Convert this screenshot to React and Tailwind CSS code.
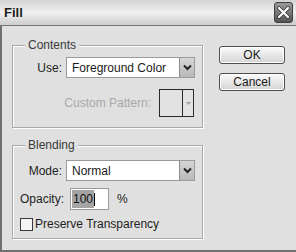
import React from 'react';

function Chevron() {
  return (
    <svg width="9" height="7" viewBox="0 0 9 7">
      <path d="M1 1.5 L4.5 5 L8 1.5" fill="none" stroke="#222" strokeWidth="2" />
    </svg>
  );
}

function Select({ value }) {
  return (
    <div className="flex-1 flex h-full bg-white border border-[#9b9b9b] ml-[4px]">
      <div className="flex-1 flex items-center pl-[5px] text-[#1a1a1a]">{value}</div>
      <div className="w-[15px] flex items-center justify-center bg-gradient-to-b from-[#d6d6d6] to-[#b9b9b9] border-l border-[#8a8a8a]">
        <Chevron />
      </div>
    </div>
  );
}

function Group({ title, height, className = '', children }) {
  return (
    <fieldset
      className={`border border-[#a8a8a8] shadow-[inset_1px_1px_0_#fff,1px_1px_0_#fff] px-[7px] ${height} ${className}`}
    >
      <legend className="ml-[5px] px-[3px] leading-[14px] bg-[#e0e0e0] text-[#3a3a3a]">{title}</legend>
      {children}
    </fieldset>
  );
}

function Button({ children }) {
  return (
    <button className="w-[66px] h-[18px] rounded-[3px] border border-[#4e4e4e] bg-gradient-to-b from-[#fbfbfb] to-[#d4d4d4] shadow-[inset_0_0_0_1px_#fff] text-[12px] leading-none text-[#1a1a1a]">
      {children}
    </button>
  );
}

export default function App() {
  return (
    <div className="w-[296px] h-[252px] flex flex-col bg-[#e0e0e0] font-['Liberation_Sans',Arial,sans-serif] text-[12px] text-[#1e1e1e] overflow-hidden">
      {/* Title bar */}
      <div className="h-[26px] flex items-center justify-between pl-[4px] pr-[3px] border-b border-[#767676] bg-gradient-to-b from-[#d2d2d2] via-[#f1f1f1] to-[#cdcdcd]">
        <span className="font-bold text-[13px] text-[#1a1a1a]">Fill</span>
        <div className="w-[19px] h-[21px] rounded-[3px] border border-[#3f3f3f] bg-gradient-to-b from-[#9a9a9a] to-[#555] flex items-center justify-center">
          <svg width="13" height="13" viewBox="0 0 13 13">
            <path d="M2 2 L11 11 M11 2 L2 11" stroke="#333" strokeWidth="3.6" strokeLinecap="round" />
            <path d="M2 2 L11 11 M11 2 L2 11" stroke="#fff" strokeWidth="2.2" strokeLinecap="round" />
          </svg>
        </div>
      </div>

      <div className="flex flex-1 border-l-2 border-b-2 border-[#6f6f6f]">
        {/* Left column */}
        <div className="w-[201px] pl-[10px] pt-[12px]">
          <Group title="Contents" height="h-[90px]">
            <div className="flex items-center h-[21px] mt-[5px]">
              <span className="w-[42px] text-right">Use:</span>
              <Select value="Foreground Color" />
            </div>
            <div className="flex items-center justify-end mt-[11px] pr-[1px]">
              <span className="text-[#a9a9a9] mr-[8px]">Custom Pattern:</span>
              <div className="w-[35px] h-[28px] flex border border-[#2a2a2a] bg-[#e2e2e2]">
                <div className="flex-1 border-r border-[#2a2a2a]" />
                <div className="w-[10px] flex items-center justify-center">
                  <svg width="5" height="3" viewBox="0 0 5 3">
                    <path d="M0 0 L5 0 L2.5 3 Z" fill="#a0a0a0" />
                  </svg>
                </div>
              </div>
            </div>
          </Group>

          <Group title="Blending" height="h-[101px]" className="mt-[10px]">
            <div className="flex items-center h-[21px] mt-[8px]">
              <span className="w-[42px] text-right">Mode:</span>
              <Select value="Normal" />
            </div>
            <div className="flex items-center h-[22px] mt-[7px]">
              <span className="w-[42px] text-right">Opacity:</span>
              <div className="ml-[8px] w-[39px] h-full bg-white border border-[#9b9b9b] flex items-center pl-[1px]">
                <span className="bg-[#a4a4a4] text-[#111] px-[1px]">100</span>
                <span className="w-px h-[13px] bg-black" />
              </div>
              <span className="ml-[8px]">%</span>
            </div>
            <div className="flex items-center h-[14px] mt-[7px]">
              <div className="w-[13px] h-[13px] border border-[#3a3a3a] bg-[#f4f4f4]" />
              <span className="ml-[2px]">Preserve Transparency</span>
            </div>
          </Group>
        </div>

        {/* Buttons */}
        <div className="flex flex-col gap-[9px] pl-[16px] pt-[20px]">
          <Button>OK</Button>
          <Button>Cancel</Button>
        </div>
      </div>
    </div>
  );
}
